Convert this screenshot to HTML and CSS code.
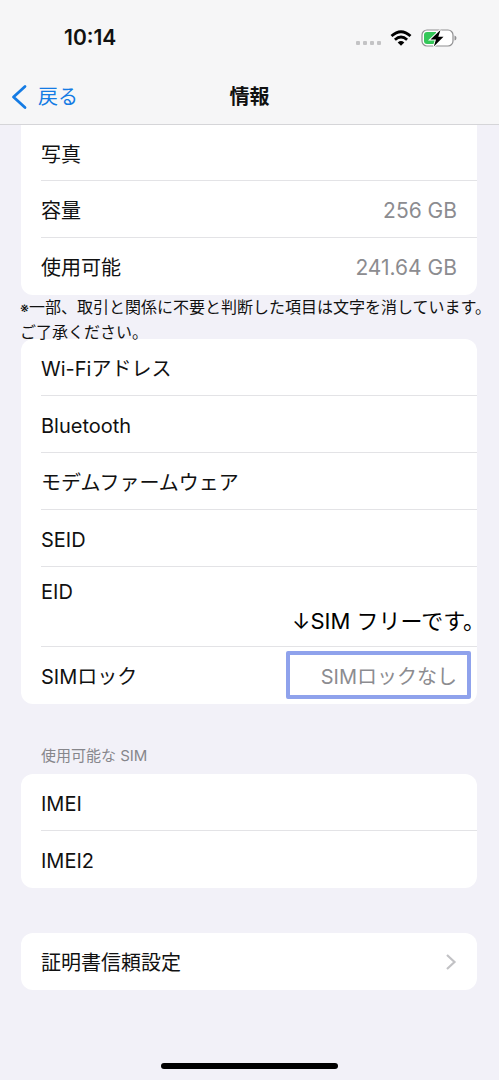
FILE: index.html
```html
<!DOCTYPE html>
<html lang="ja">
<head>
<meta charset="utf-8">
<meta name="viewport" content="width=device-width, initial-scale=1">
<title>情報</title>
<link rel="stylesheet" href="styles.css">
</head>
<body>
<div class="screen">
  <header class="top">
    <div class="status">
      <time class="clock">10:14</time>
      <div class="indicators">
        <span class="dots"><i></i><i></i><i></i><i></i></span>
        <svg class="wifi" width="22" height="16" viewBox="0 0 22 16" aria-hidden="true">
          <g fill="none" stroke="#000" stroke-width="2.8">
            <path d="M1.5 6Q11-2.600 20.500 6"/>
            <path d="M4.900 9.800Q11 4.200 17.100 9.800"/>
          </g>
          <path d="M7.700 12.400Q11 9.700 14.300 12.400L11 15.800Z"/>
        </svg>
        <svg class="battery" width="36" height="20" viewBox="0 0 36 20" aria-hidden="true">
          <rect x="1" y="2" width="31" height="16" rx="5" fill="#fff" stroke="#909092" stroke-width="1.200"/>
          <path d="M6 4H15V16H6Q3 16 3 13V7Q3 4 6 4Z" fill="#34c759"/>
          <path d="M33.500 7.500Q35.500 8 35.500 10T33.500 12.500Z" fill="#909092"/>
          <path d="M19.500 2L9.500 11.500H15L12.800 18.500L22.500 8.800H17.300Z" fill="#000" stroke="#fff" stroke-width="2" paint-order="stroke"/>
        </svg>
      </div>
    </div>
    <nav class="nav">
      <a class="back" href="#">
        <svg width="16" height="26" viewBox="0 0 16 26" aria-hidden="true"><path d="M14 2.500L2.500 13L14 23.500" fill="none" stroke="#147be4" stroke-width="2.800" stroke-linecap="round" stroke-linejoin="round"/></svg>
        <span>戻る</span>
      </a>
      <h1 class="title">情報</h1>
    </nav>
  </header>
  <main class="content">
    <dl class="card card-first">
      <div class="row"><dt>写真</dt></div>
      <div class="row"><dt>容量</dt><dd class="value">256 GB</dd></div>
      <div class="row"><dt>使用可能</dt><dd class="value">241.64 GB</dd></div>
    </dl>
    <p class="note"><span class="mark">※</span>一部、取引と関係に不要と判断した項目は文字を消しています。<br>ご了承ください。</p>
    <dl class="card">
      <div class="row"><dt>Wi-Fiアドレス</dt></div>
      <div class="row"><dt>Bluetooth</dt></div>
      <div class="row"><dt>モデムファームウェア</dt></div>
      <div class="row"><dt>SEID</dt></div>
      <div class="row row-tall"><dt>EID</dt><dd class="callout">↓SIM フリーです。</dd></div>
      <div class="row"><dt>SIMロック</dt><dd class="marked">SIMロックなし</dd></div>
    </dl>
    <h2 class="section">使用可能な SIM</h2>
    <dl class="card">
      <div class="row"><dt>IMEI</dt></div>
      <div class="row"><dt>IMEI2</dt></div>
    </dl>
    <a class="card link" href="#">
      <span>証明書信頼設定</span>
      <svg width="12" height="18" viewBox="0 0 12 18" aria-hidden="true"><path d="M2 1L9.500 8L2 15" fill="none" stroke="#c2c2c5" stroke-width="2.200"/></svg>
    </a>
  </main>
  <div class="home"></div>
</div>
</body>
</html>
```
FILE: styles.css
```css
* { box-sizing: border-box; }

body {
  margin: 0;
  background: #f2f1f8;
  color: #111;
  font-family: Inter, "Noto Sans CJK JP", sans-serif;
  font-size: 20px;
  line-height: 28px;
}

dl, dd, p, h1, h2 { margin: 0; }

a { color: inherit; text-decoration: none; }

.screen {
  min-height: 100vh;
  display: flex;
  flex-direction: column;
}

.top {
  background: #f6f6f7;
  border-bottom: 1px solid #d5d5d8;
}

.status {
  display: flex;
  align-items: center;
  justify-content: space-between;
  height: 68px;
  padding: 8px 42px 0 64px;
}

.clock {
  font-size: 21px;
  font-weight: 600;
}

.indicators {
  display: flex;
  align-items: center;
}

.dots {
  display: flex;
  gap: 3px;
  margin: 9px 9px 0 0;
}

.dots i {
  width: 4px;
  height: 4px;
  border-radius: 1px;
  background: #c3c3c5;
}

.wifi { margin-right: 9px; }

.nav {
  display: grid;
  grid-template-columns: 1fr auto 1fr;
  align-items: center;
  height: 56px;
  padding: 2px 11px 0;
}

.back {
  display: flex;
  align-items: center;
  gap: 11px;
  color: #147be4;
}

.title {
  font-size: 20px;
  font-weight: 700;
  line-height: 28px;
}

.content {
  flex: 1;
  padding: 0 22px 0 21px;
}

.card {
  background: #fff;
  border-radius: 12px;
}

.card-first { border-radius: 0 0 12px 12px; }

.row {
  position: relative;
  display: flex;
  align-items: center;
  justify-content: space-between;
  height: 57px;
  margin-left: 20px;
  padding: 4px 20px 0 0;
  border-bottom: 1px solid #e3e3e6;
}

.row:last-child { border-bottom-color: transparent; }

.card-first .row:first-child { height: 56px; }

.row dd { color: #8c8c90; }

.value { font-size: 21px; }

.row-tall {
  align-items: flex-start;
  height: 80px;
  padding-top: 11px;
}

.row .callout {
  position: absolute;
  right: -8px;
  bottom: 11px;
  color: #000;
  font-size: 22px;
  white-space: nowrap;
}

.marked {
  margin: -4px -14px 0 0;
  padding: 8px 10px 4px 31px;
  border: 4px solid #8fa2ec;
  border-radius: 2px;
}

.note {
  margin: 0 -22px -6px -1px;
  font-size: 16px;
  line-height: 25px;
  white-space: nowrap;
}

.mark { font-size: 14px; }

.section {
  padding: 38px 20px 4px;
  color: #86868b;
  font-size: 15px;
  font-weight: 400;
}

.link {
  display: flex;
  align-items: center;
  justify-content: space-between;
  height: 57px;
  margin-top: 45px;
  padding: 2px 20px 0;
}

.home {
  width: 177px;
  height: 6px;
  margin: 0 auto 11px;
  border-radius: 3px;
  background: #000;
}
```
